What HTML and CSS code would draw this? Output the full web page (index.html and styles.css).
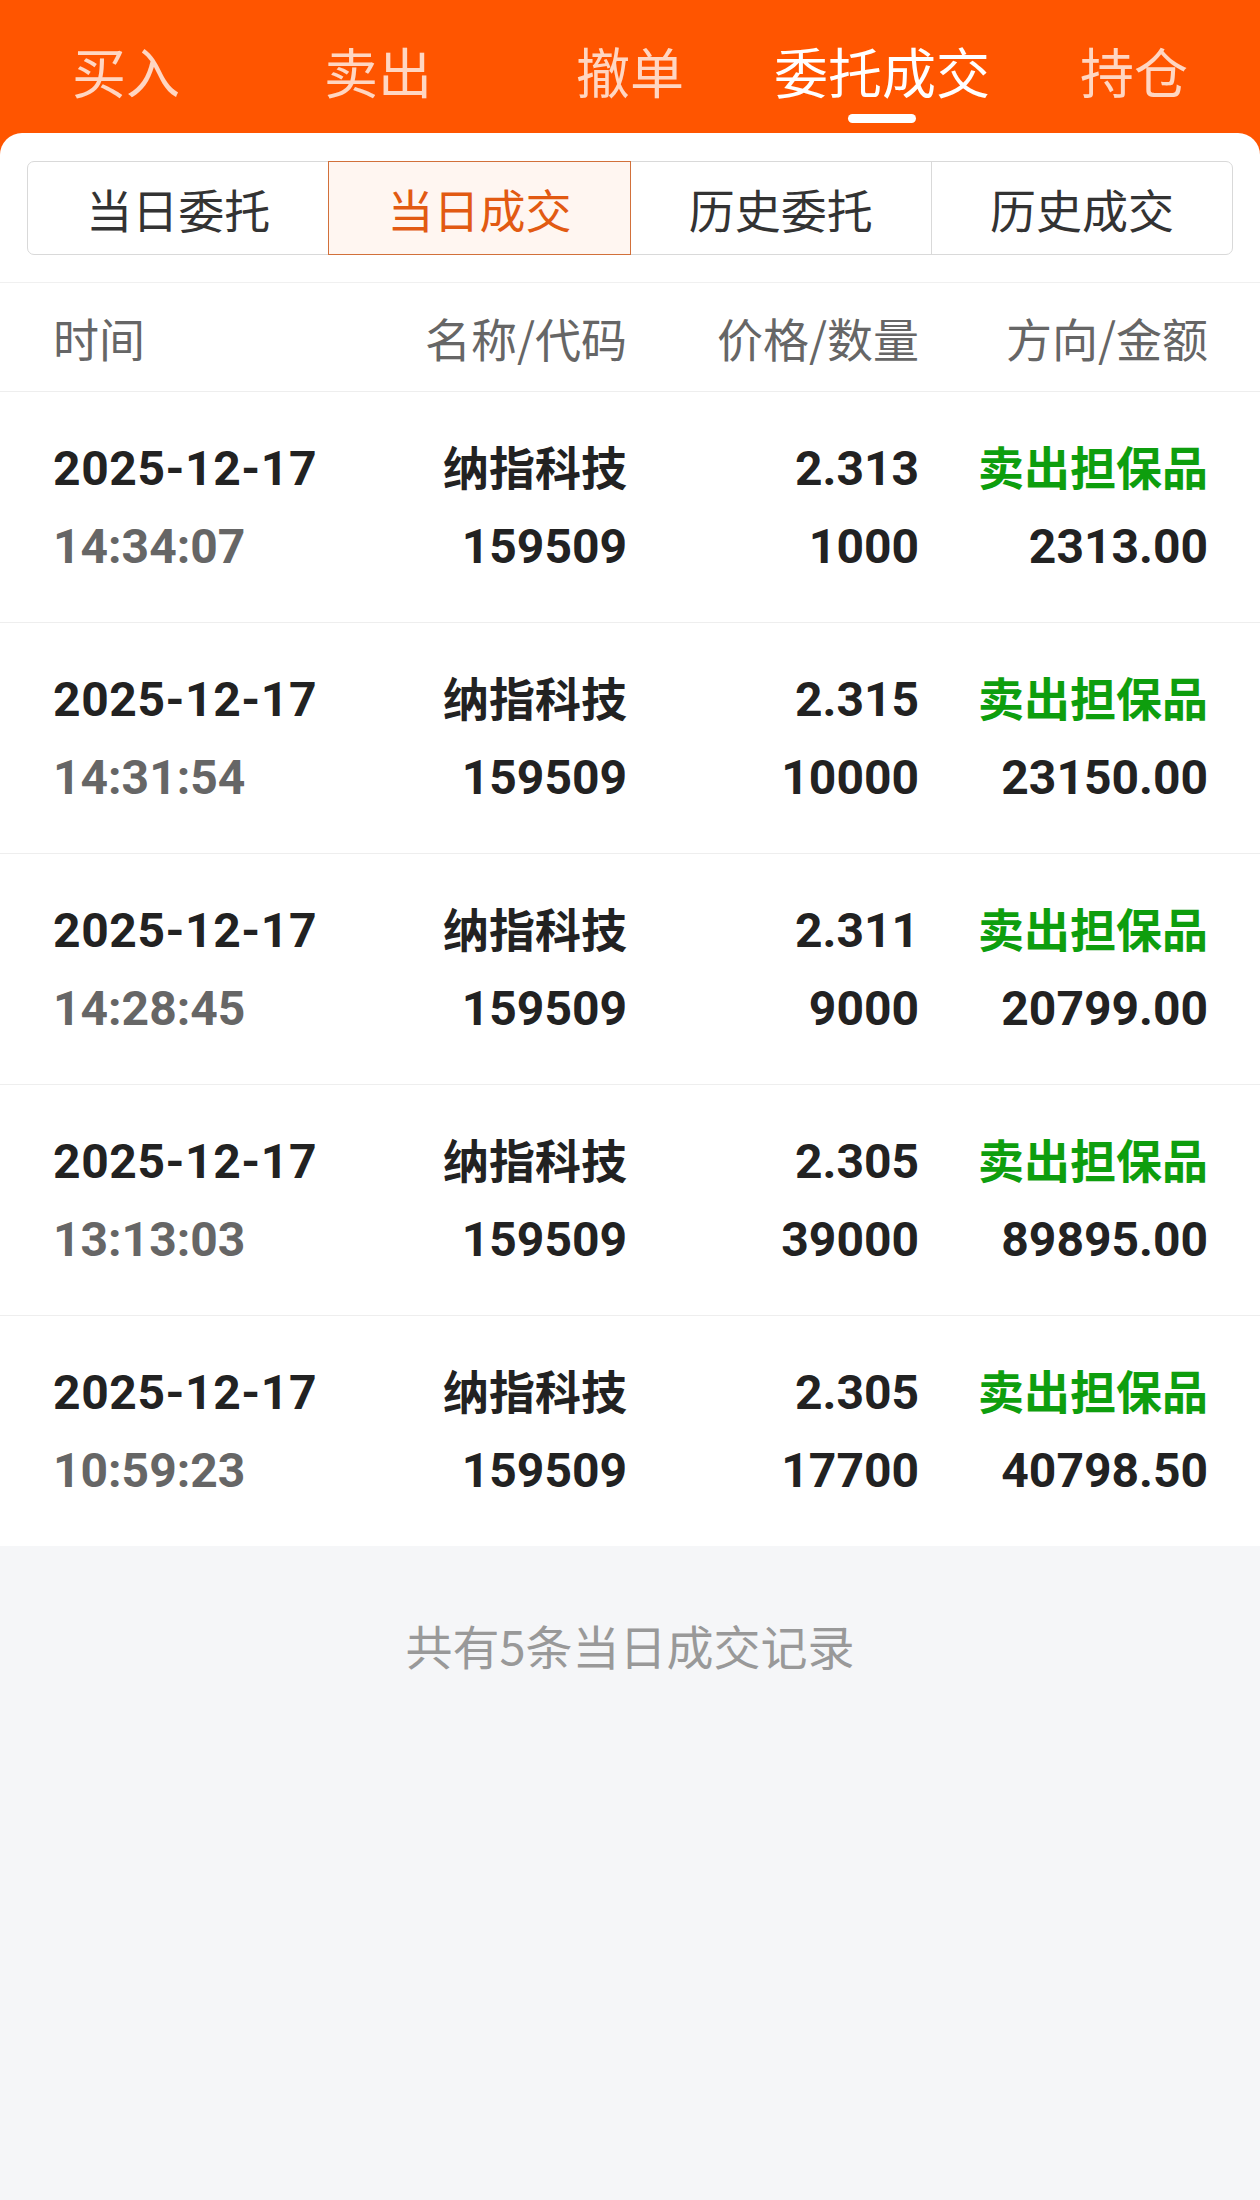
FILE: index.html
```html
<!DOCTYPE html>
<html lang="zh-CN">
<head>
    <meta charset="UTF-8">
    <meta name="viewport" content="width=device-width, initial-scale=1.0">
    <title>委托成交</title>
    <link rel="stylesheet" href="styles.css">
</head>
<body>
    <nav class="top-tabs">
        <div class="tab">买入</div>
        <div class="tab">卖出</div>
        <div class="tab">撤单</div>
        <div class="tab active">委托成交</div>
        <div class="tab">持仓</div>
    </nav>

    <div class="panel">
        <div class="segment">
            <div class="segment-item">当日委托</div>
            <div class="segment-item active">当日成交</div>
            <div class="segment-item">历史委托</div>
            <div class="segment-item">历史成交</div>
        </div>

        <div class="table-head">
            <span>时间</span>
            <span>名称/代码</span>
            <span>价格/数量</span>
            <span>方向/金额</span>
        </div>

        <div class="trade-row">
            <div class="cell"><p>2025-12-17</p><p class="muted">14:34:07</p></div>
            <div class="cell"><p class="name">纳指科技</p><p>159509</p></div>
            <div class="cell"><p>2.313</p><p>1000</p></div>
            <div class="cell"><p class="sell">卖出担保品</p><p>2313.00</p></div>
        </div>

        <div class="trade-row">
            <div class="cell"><p>2025-12-17</p><p class="muted">14:31:54</p></div>
            <div class="cell"><p class="name">纳指科技</p><p>159509</p></div>
            <div class="cell"><p>2.315</p><p>10000</p></div>
            <div class="cell"><p class="sell">卖出担保品</p><p>23150.00</p></div>
        </div>

        <div class="trade-row">
            <div class="cell"><p>2025-12-17</p><p class="muted">14:28:45</p></div>
            <div class="cell"><p class="name">纳指科技</p><p>159509</p></div>
            <div class="cell"><p>2.311</p><p>9000</p></div>
            <div class="cell"><p class="sell">卖出担保品</p><p>20799.00</p></div>
        </div>

        <div class="trade-row">
            <div class="cell"><p>2025-12-17</p><p class="muted">13:13:03</p></div>
            <div class="cell"><p class="name">纳指科技</p><p>159509</p></div>
            <div class="cell"><p>2.305</p><p>39000</p></div>
            <div class="cell"><p class="sell">卖出担保品</p><p>89895.00</p></div>
        </div>

        <div class="trade-row">
            <div class="cell"><p>2025-12-17</p><p class="muted">10:59:23</p></div>
            <div class="cell"><p class="name">纳指科技</p><p>159509</p></div>
            <div class="cell"><p>2.305</p><p>17700</p></div>
            <div class="cell"><p class="sell">卖出担保品</p><p>40798.50</p></div>
        </div>
    </div>

    <div class="summary">共有5条当日成交记录</div>
</body>
</html>
```

FILE: styles.css
```css
* {
    margin: 0;
    padding: 0;
    box-sizing: border-box;
}

body {
    background: #f5f6f8;
    font-family: Roboto, 'Noto Sans CJK SC', sans-serif;
    color: #222;
    min-height: 100vh;
}

/* top orange tab bar */
.top-tabs {
    background: #ff5500;
    display: grid;
    grid-template-columns: repeat(5, 1fr);
    height: 163px;
    padding-bottom: 30px;
}

.tab {
    display: flex;
    flex-direction: column;
    align-items: center;
    padding-top: 44px;
    font-family: 'Noto Sans CJK SC', sans-serif;
    font-size: 54px;
    line-height: 54px;
    color: rgba(255, 255, 255, 0.76);
}

.tab.active {
    color: #fff;
}

.tab.active::after {
    content: '';
    display: block;
    width: 68px;
    height: 9px;
    margin-top: 16px;
    border-radius: 5px;
    background: #fff;
}

/* white panel */
.panel {
    background: #fff;
    margin-top: -30px;
    border-radius: 22px 22px 0 0;
    padding-top: 28px;
}

.segment {
    display: flex;
    margin: 0 27px 27px 28px;
}

.segment-item {
    flex: 1;
    height: 94px;
    line-height: 92px;
    text-align: center;
    font-family: 'Noto Sans CJK SC', sans-serif;
    font-size: 46px;
    color: #333;
    border: 1px solid #d9d9d9;
    margin-left: -1px;
    position: relative;
}

.segment-item:first-child {
    border-radius: 7px 0 0 7px;
}

.segment-item:last-child {
    border-radius: 0 7px 7px 0;
}

.segment-item.active {
    z-index: 1;
    color: #e25a12;
    background: #fff6f1;
    border-color: #d2703a;
}

.table-head,
.trade-row {
    display: grid;
    grid-template-columns: 1fr 290px 292px 289px;
    padding: 0 52px 0 53px;
}

.table-head {
    border-top: 1px solid #f0f0f0;
    border-bottom: 1px solid #eeeeee;
    height: 110px;
    align-items: center;
    font-family: 'Noto Sans CJK SC', sans-serif;
    font-size: 46px;
    color: #666;
}

.table-head span,
.cell {
    text-align: right;
}

.table-head span:first-child,
.cell:first-child {
    text-align: left;
}

.trade-row {
    padding-top: 38px;
    padding-bottom: 36px;
    border-bottom: 1px solid #eeeeee;
}

.trade-row:last-child {
    border-bottom: none;
}

.cell p {
    font-size: 48px;
    line-height: 78px;
    font-weight: 700;
    white-space: nowrap;
}

.cell:first-child p:first-child {
    letter-spacing: 0.6px;
}

.cell .name,
.cell .sell {
    font-size: 46px;
}

.cell .muted {
    color: #666;
}

.cell .sell {
    color: #0e9e0e;
}

.summary {
    padding-top: 75px;
    text-align: center;
    font-family: 'Noto Sans CJK SC', sans-serif;
    font-size: 47px;
    line-height: 48px;
    color: #999;
}
```
